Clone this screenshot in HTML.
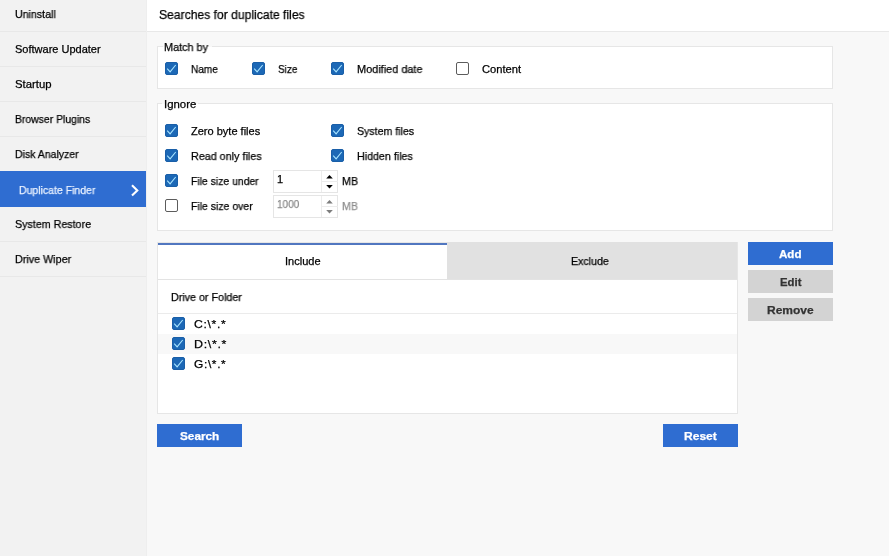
<!DOCTYPE html>
<html>
<head>
<meta charset="utf-8">
<style>
*{box-sizing:border-box;margin:0;padding:0}
html,body{width:889px;height:556px;overflow:hidden;background:#f8f8f8;font-family:"Liberation Sans",sans-serif;font-size:11px;color:#111}
.abs{position:absolute}
.lb{position:absolute;white-space:nowrap;line-height:normal;transform-origin:0 0;will-change:transform;-webkit-text-stroke:0.25px currentColor}
.grp{position:absolute;background:#fff;border:1px solid #e6e6e6}
.cb{position:absolute;width:13px;height:13px;border-radius:2px;background:#1c68b6;border:1px solid #1a5fa8}
.cb.off{background:#fff;border:1px solid #5c5c5c}
.cb svg{position:absolute;left:-1px;top:-1px}
.spin{position:absolute;width:65px;height:23px;border:1px solid #e5e5e5;background:#fff}
</style>
</head>
<body>
<div class="abs" style="left:0px;top:0px;width:146px;height:556px;background:#f2f2f2;"></div>
<div class="abs" style="left:146px;top:0px;width:1px;height:556px;background:#eeeeee;"></div>
<div class="abs" style="left:0px;top:31px;width:146px;height:1px;background:#e8e8e8;"></div>
<div class="abs" style="left:0px;top:66px;width:146px;height:1px;background:#e8e8e8;"></div>
<div class="abs" style="left:0px;top:101px;width:146px;height:1px;background:#e8e8e8;"></div>
<div class="abs" style="left:0px;top:136px;width:146px;height:1px;background:#e8e8e8;"></div>
<div class="abs" style="left:0px;top:241px;width:146px;height:1px;background:#e8e8e8;"></div>
<div class="abs" style="left:0px;top:276px;width:146px;height:1px;background:#e8e8e8;"></div>
<div class="abs" style="left:0px;top:171px;width:146px;height:36px;background:#2f6dd1;"></div>
<svg class="abs" style="left:129px;top:183px" width="11" height="15" viewBox="0 0 11 15"><path d="M3 2.2 L8.3 7.4 L3 12.6" fill="none" stroke="#fff" stroke-width="2.1"/></svg>
<div class="abs" style="left:147px;top:0px;width:742px;height:31px;background:#fff;"></div>
<div class="abs" style="left:147px;top:31px;width:742px;height:1px;background:#e8e8e8;"></div>
<div class="grp" style="left:157px;top:46px;width:676px;height:43px"></div>
<div class="grp" style="left:157px;top:103px;width:676px;height:128px"></div>
<div class="abs" style="left:163px;top:39px;width:49px;height:8px;background:#f8f8f8;"></div>
<div id="g1" class="lb" style="left:164px;top:41px;font-size:11px;color:#000;font-weight:normal;transform:scaleX(0.9856)">Match by</div>
<div class="abs" style="left:162px;top:96px;width:36px;height:8px;background:#f8f8f8;"></div>
<div id="g2" class="lb" style="left:164px;top:98px;font-size:11px;color:#000;font-weight:normal;transform:scaleX(1.0349)">Ignore</div>
<div class="cb" style="left:165px;top:62px"><svg width="13" height="13" viewBox="0 0 13 13"><path d="M2.2 6.7 L5.1 9.8 L10.7 3.0" fill="none" stroke="#a8e4ff" stroke-width="1.1"/></svg></div>
<div class="cb" style="left:252px;top:62px"><svg width="13" height="13" viewBox="0 0 13 13"><path d="M2.2 6.7 L5.1 9.8 L10.7 3.0" fill="none" stroke="#a8e4ff" stroke-width="1.1"/></svg></div>
<div class="cb" style="left:331px;top:62px"><svg width="13" height="13" viewBox="0 0 13 13"><path d="M2.2 6.7 L5.1 9.8 L10.7 3.0" fill="none" stroke="#a8e4ff" stroke-width="1.1"/></svg></div>
<div class="cb off" style="left:456px;top:62px"></div>
<div class="cb" style="left:165px;top:124px"><svg width="13" height="13" viewBox="0 0 13 13"><path d="M2.2 6.7 L5.1 9.8 L10.7 3.0" fill="none" stroke="#a8e4ff" stroke-width="1.1"/></svg></div>
<div class="cb" style="left:331px;top:124px"><svg width="13" height="13" viewBox="0 0 13 13"><path d="M2.2 6.7 L5.1 9.8 L10.7 3.0" fill="none" stroke="#a8e4ff" stroke-width="1.1"/></svg></div>
<div class="cb" style="left:165px;top:149px"><svg width="13" height="13" viewBox="0 0 13 13"><path d="M2.2 6.7 L5.1 9.8 L10.7 3.0" fill="none" stroke="#a8e4ff" stroke-width="1.1"/></svg></div>
<div class="cb" style="left:331px;top:149px"><svg width="13" height="13" viewBox="0 0 13 13"><path d="M2.2 6.7 L5.1 9.8 L10.7 3.0" fill="none" stroke="#a8e4ff" stroke-width="1.1"/></svg></div>
<div class="cb" style="left:165px;top:174px"><svg width="13" height="13" viewBox="0 0 13 13"><path d="M2.2 6.7 L5.1 9.8 L10.7 3.0" fill="none" stroke="#a8e4ff" stroke-width="1.1"/></svg></div>
<div class="cb off" style="left:165px;top:199px"></div>
<div class="spin" style="left:273px;top:170px"><div class="abs" style="left:47px;top:0;width:1px;height:21px;background:#ececec"></div><div class="abs" style="left:48px;top:10px;width:16px;height:1px;background:#ececec"></div><svg class="abs" style="left:51.5px;top:3.8px" width="7" height="4" viewBox="0 0 7 4"><path d="M0.2 3.4 L3.5 0.1 L6.8 3.4 Z" fill="#000"/></svg><svg class="abs" style="left:51.5px;top:13.8px" width="7" height="4" viewBox="0 0 7 4"><path d="M0.2 0.1 L3.5 3.4 L6.8 0.1 Z" fill="#000"/></svg></div>
<div class="spin" style="left:273px;top:195px"><div class="abs" style="left:47px;top:0;width:1px;height:21px;background:#ececec"></div><div class="abs" style="left:48px;top:10px;width:16px;height:1px;background:#ececec"></div><svg class="abs" style="left:51.5px;top:3.8px" width="7" height="4" viewBox="0 0 7 4"><path d="M0.2 3.4 L3.5 0.1 L6.8 3.4 Z" fill="#7d7d7d"/></svg><svg class="abs" style="left:51.5px;top:13.8px" width="7" height="4" viewBox="0 0 7 4"><path d="M0.2 0.1 L3.5 3.4 L6.8 0.1 Z" fill="#7d7d7d"/></svg></div>
<div class="abs" style="left:157px;top:242px;width:581px;height:172px;background:#fff;border:1px solid #e6e6e6"></div>
<div class="abs" style="left:158px;top:243px;width:289px;height:2px;background:#5177c0;"></div>
<div class="abs" style="left:447px;top:242px;width:290px;height:37px;background:#e1e1e1;"></div>
<div class="abs" style="left:158px;top:279px;width:579px;height:1px;background:#e3e3e3;"></div>
<div class="abs" style="left:158px;top:313px;width:579px;height:1px;background:#ebebeb;"></div>
<div class="abs" style="left:158px;top:334px;width:579px;height:20px;background:#f8f8f8;"></div>
<div class="cb" style="left:172px;top:317px"><svg width="13" height="13" viewBox="0 0 13 13"><path d="M2.2 6.7 L5.1 9.8 L10.7 3.0" fill="none" stroke="#a8e4ff" stroke-width="1.1"/></svg></div>
<div class="cb" style="left:172px;top:337px"><svg width="13" height="13" viewBox="0 0 13 13"><path d="M2.2 6.7 L5.1 9.8 L10.7 3.0" fill="none" stroke="#a8e4ff" stroke-width="1.1"/></svg></div>
<div class="cb" style="left:172px;top:357px"><svg width="13" height="13" viewBox="0 0 13 13"><path d="M2.2 6.7 L5.1 9.8 L10.7 3.0" fill="none" stroke="#a8e4ff" stroke-width="1.1"/></svg></div>
<div class="abs" style="left:748px;top:242px;width:85px;height:23px;background:#2f6dd1;"></div>
<div class="abs" style="left:748px;top:270px;width:85px;height:23px;background:#d3d3d3;"></div>
<div class="abs" style="left:748px;top:298px;width:85px;height:23px;background:#d3d3d3;"></div>
<div class="abs" style="left:157px;top:424px;width:85px;height:23px;background:#2f6dd1;"></div>
<div class="abs" style="left:663px;top:424px;width:75px;height:23px;background:#2f6dd1;"></div>
<div id="s1" class="lb" style="left:15px;top:8px;font-size:11px;color:#000;font-weight:normal;transform:scaleX(0.966)">Uninstall</div>
<div id="s2" class="lb" style="left:15px;top:43px;font-size:11px;color:#000;font-weight:normal;transform:scaleX(0.9995)">Software Updater</div>
<div id="s3" class="lb" style="left:15px;top:78px;font-size:11px;color:#000;font-weight:normal;transform:scaleX(1.0299)">Startup</div>
<div id="s4" class="lb" style="left:15px;top:113px;font-size:11px;color:#000;font-weight:normal;transform:scaleX(0.946)">Browser Plugins</div>
<div id="s5" class="lb" style="left:15px;top:148px;font-size:11px;color:#000;font-weight:normal;transform:scaleX(0.956)">Disk Analyzer</div>
<div id="s6" class="lb" style="left:19px;top:184px;font-size:11px;color:#eaf2ff;font-weight:normal;transform:scaleX(0.954)">Duplicate Finder</div>
<div id="s7" class="lb" style="left:15px;top:218px;font-size:11px;color:#000;font-weight:normal;transform:scaleX(0.9722)">System Restore</div>
<div id="s8" class="lb" style="left:15px;top:253px;font-size:11px;color:#000;font-weight:normal;transform:scaleX(0.9783)">Drive Wiper</div>
<div id="h" class="lb" style="left:159px;top:8px;font-size:12.5px;color:#000;font-weight:normal;transform:scaleX(0.9703)">Searches for duplicate files</div>
<div id="m1" class="lb" style="left:191px;top:63px;font-size:11px;color:#000;font-weight:normal;transform:scaleX(0.9139)">Name</div>
<div id="m2" class="lb" style="left:278px;top:63px;font-size:11px;color:#000;font-weight:normal;transform:scaleX(0.912)">Size</div>
<div id="m3" class="lb" style="left:357px;top:63px;font-size:11px;color:#000;font-weight:normal;transform:scaleX(0.9913)">Modified date</div>
<div id="m4" class="lb" style="left:482px;top:63px;font-size:11px;color:#000;font-weight:normal;transform:scaleX(1.0147)">Content</div>
<div id="i1" class="lb" style="left:191px;top:125px;font-size:11px;color:#000;font-weight:normal;transform:scaleX(1.0017)">Zero byte files</div>
<div id="i2" class="lb" style="left:357px;top:125px;font-size:11px;color:#000;font-weight:normal;transform:scaleX(0.963)">System files</div>
<div id="i3" class="lb" style="left:191px;top:150px;font-size:11px;color:#000;font-weight:normal;transform:scaleX(0.9789)">Read only files</div>
<div id="i4" class="lb" style="left:357px;top:150px;font-size:11px;color:#000;font-weight:normal;transform:scaleX(0.9702)">Hidden files</div>
<div id="i5" class="lb" style="left:191px;top:175px;font-size:11px;color:#000;font-weight:normal;transform:scaleX(0.9464)">File size under</div>
<div id="i6" class="lb" style="left:191px;top:200px;font-size:11px;color:#000;font-weight:normal;transform:scaleX(0.951)">File size over</div>
<div id="n1" class="lb" style="left:277px;top:173px;font-size:11px;color:#000;font-weight:normal;transform:scaleX(1)">1</div>
<div id="n2" class="lb" style="left:277px;top:198px;font-size:11px;color:#8a8a8a;font-weight:normal;transform:scaleX(0.9147)">1000</div>
<div id="u1" class="lb" style="left:342px;top:175px;font-size:11px;color:#000;font-weight:normal;transform:scaleX(0.9692)">MB</div>
<div id="u2" class="lb" style="left:342px;top:200px;font-size:11px;color:#8e8e8e;font-weight:normal;transform:scaleX(0.9637)">MB</div>
<div id="t1" class="lb" style="left:285px;top:255px;font-size:11px;color:#000;font-weight:normal;transform:scaleX(1.0016)">Include</div>
<div id="t2" class="lb" style="left:571px;top:255px;font-size:11px;color:#000;font-weight:normal;transform:scaleX(0.9657)">Exclude</div>
<div id="d0" class="lb" style="left:171px;top:291px;font-size:11px;color:#000;font-weight:normal;transform:scaleX(0.9747)">Drive or Folder</div>
<div id="d1" class="lb" style="left:194px;top:318px;font-size:11px;color:#000;font-weight:normal;transform:scaleX(1.1067);letter-spacing:0.6px">C:\*.*</div>
<div id="d2" class="lb" style="left:194px;top:338px;font-size:11px;color:#000;font-weight:normal;transform:scaleX(1.1309);letter-spacing:0.6px">D:\*.*</div>
<div id="d3" class="lb" style="left:194px;top:358px;font-size:11px;color:#000;font-weight:normal;transform:scaleX(1.0837);letter-spacing:0.6px">G:\*.*</div>
<div id="b1" class="lb" style="left:779px;top:248px;font-size:11px;color:#fff;font-weight:bold;transform:scaleX(1.0523)">Add</div>
<div id="b2" class="lb" style="left:780px;top:276px;font-size:11px;color:#333;font-weight:bold;transform:scaleX(1.0324)">Edit</div>
<div id="b3" class="lb" style="left:767px;top:304px;font-size:11px;color:#333;font-weight:bold;transform:scaleX(1.0897)">Remove</div>
<div id="b4" class="lb" style="left:180px;top:430px;font-size:11px;color:#fff;font-weight:bold;transform:scaleX(1.0703)">Search</div>
<div id="b5" class="lb" style="left:684px;top:430px;font-size:11px;color:#fff;font-weight:bold;transform:scaleX(1.0938)">Reset</div>
</body>
</html>
